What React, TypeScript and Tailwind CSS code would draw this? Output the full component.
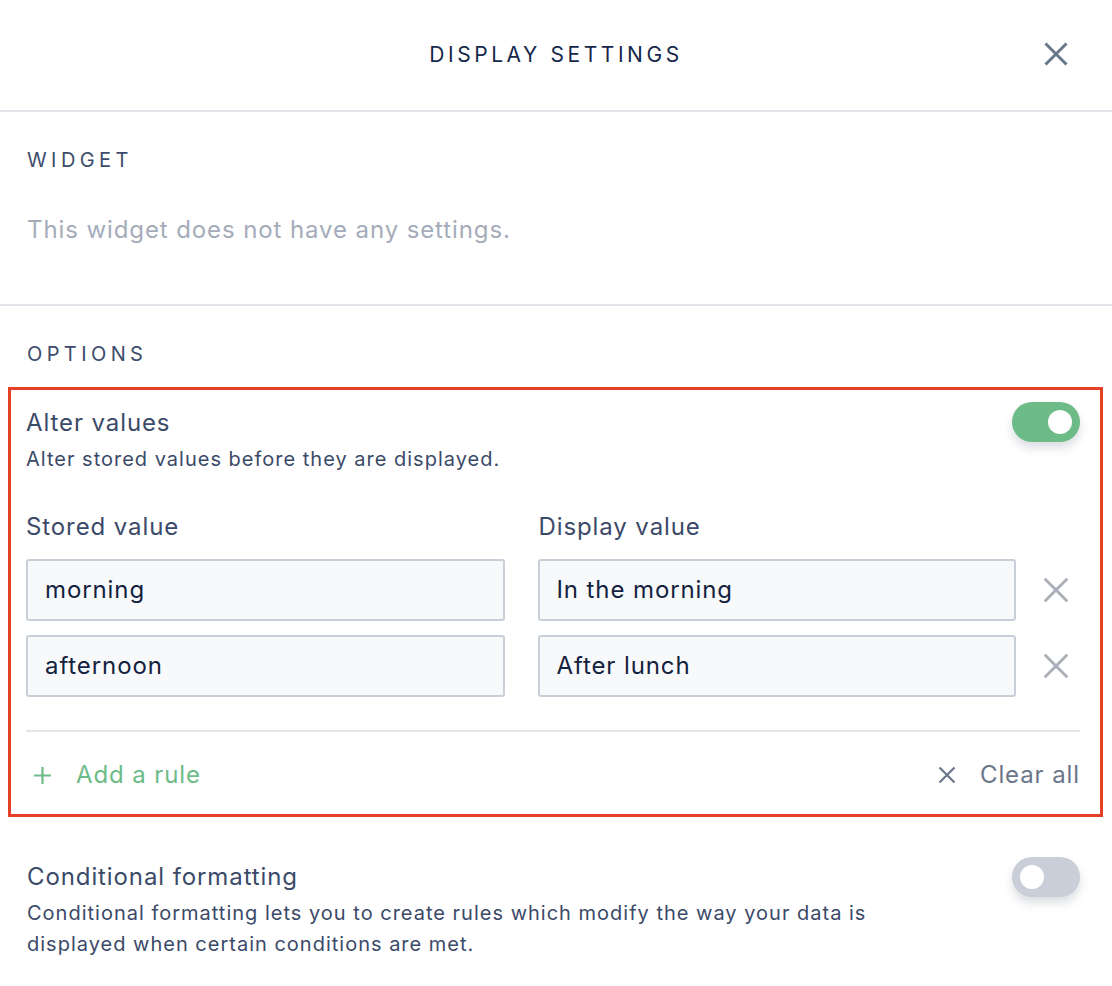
import React from "react";

const font = { fontFamily: "Inter, Lato, sans-serif" };

function XIcon({ size, color, stroke = 2 }: { size: number; color: string; stroke?: number }) {
  return (
    <svg width={size} height={size} viewBox="0 0 24 24" fill="none" stroke={color} strokeWidth={stroke} strokeLinecap="butt">
      <path d="M3 3 L21 21 M21 3 L3 21" />
    </svg>
  );
}

function Toggle({ on }: { on: boolean }) {
  return (
    <div
      className={`relative h-[40px] w-[68px] rounded-full shadow-[0_6px_10px_rgba(60,70,100,0.18)] ${on ? "bg-[#6dbb87]" : "bg-[#c9ced8]"}`}
    >
      <div
        className={`absolute top-[8px] h-[24px] w-[24px] rounded-full bg-white ${on ? "left-[36px]" : "left-[8px]"}`}
      />
    </div>
  );
}

function Input({ value }: { value: string }) {
  return (
    <div className="flex h-[62px] flex-1 items-center rounded-[3px] border-2 border-[#c9cfd8] bg-[#f8f9fa] px-[17px] text-[24px] leading-[30px] tracking-[0.9px] text-[#13223f]">
      {value}
    </div>
  );
}

export default function App() {
  return (
    <div className="w-[1112px] h-[986px] bg-white overflow-hidden" style={font}>
      <header className="relative flex h-[112px] items-center justify-center border-b-2 border-[#e3e5ea]">
        <h1 className="text-[21px] leading-[24px] tracking-[0.17em] text-[#15274a]">DISPLAY SETTINGS</h1>
        <button className="absolute right-[42px] top-[40px]">
          <XIcon size={28} color="#6b7689" stroke={2.6} />
        </button>
      </header>

      <section className="border-b-2 border-[#e3e5ea] px-[27px] pt-[36px] pb-[59px]">
        <h2 className="text-[20px] leading-[24px] tracking-[0.22em] text-[#3d4c6b]">WIDGET</h2>
        <p className="mt-[43px] text-[24px] leading-[30px] tracking-[0.9px] text-[#a4acba]">This widget does not have any settings.</p>
      </section>

      <section className="pt-[36px]">
        <h2 className="px-[27px] text-[20px] leading-[24px] tracking-[0.22em] text-[#3d4c6b]">OPTIONS</h2>

        <div className="ml-[8px] mr-[9px] mt-[21px] border-[3px] border-[#e63f27] pl-[15px] pr-[20px] pt-[18px] pb-[24px]">
          <div className="flex items-start justify-between">
            <div>
              <div className="text-[24px] leading-[30px] tracking-[0.9px] text-[#3b4a68]">Alter values</div>
              <div className="mt-[8px] text-[20px] leading-[26px] tracking-[1px] text-[#3b4a68]">Alter stored values before they are displayed.</div>
            </div>
            <div className="-mt-[6px]">
              <Toggle on />
            </div>
          </div>

          <div className="mt-[40px] flex gap-[33px] pr-[64px]">
            <div className="flex-1 text-[24px] leading-[30px] tracking-[0.9px] text-[#3b4a68]">Stored value</div>
            <div className="flex-1 pl-[2px] text-[24px] leading-[30px] tracking-[0.9px] text-[#3b4a68]">Display value</div>
          </div>

          <div className="mt-[17px] flex flex-col gap-[14px]">
            {[
              ["morning", "In the morning"],
              ["afternoon", "After lunch"],
            ].map(([a, b]) => (
              <div key={a} className="flex items-center">
                <div className="flex flex-1 gap-[33px]">
                  <Input value={a} />
                  <Input value={b} />
                </div>
                <div className="flex w-[64px] justify-end pr-[9px]">
                  <XIcon size={30} color="#a9aeb8" stroke={2.3} />
                </div>
              </div>
            ))}
          </div>

          <div className="mt-[33px] h-[2px] bg-[#e3e5ea]" />

          <div className="mt-[28px] flex items-center justify-between">
            <button className="flex items-center gap-[25px] pl-[8px] text-[24px] leading-[30px] tracking-[0.9px] text-[#6dbb87]">
              <svg width="17" height="17" viewBox="0 0 20 20" stroke="#6dbb87" strokeWidth="2.6">
                <path d="M10 0 V20 M0 10 H20" />
              </svg>
              Add a rule
            </button>
            <button className="flex items-center gap-[23px] text-[24px] leading-[30px] tracking-[0.9px] text-[#6b7689]">
              <XIcon size={20} color="#6b7689" stroke={2.6} />
              Clear all
            </button>
          </div>
        </div>

        <div className="flex items-start justify-between pl-[27px] pr-[32px] pt-[45px]">
          <div>
            <div className="text-[24px] leading-[30px] tracking-[0.9px] text-[#3b4a68]">Conditional formatting</div>
            <div className="mt-[6px] w-[880px] text-[20px] leading-[31px] tracking-[1px] text-[#3b4a68]">
              Conditional formatting lets you to create rules which modify the way your data is displayed when certain conditions are met.
            </div>
          </div>
          <div className="-mt-[5px]">
            <Toggle on={false} />
          </div>
        </div>
      </section>
    </div>
  );
}
